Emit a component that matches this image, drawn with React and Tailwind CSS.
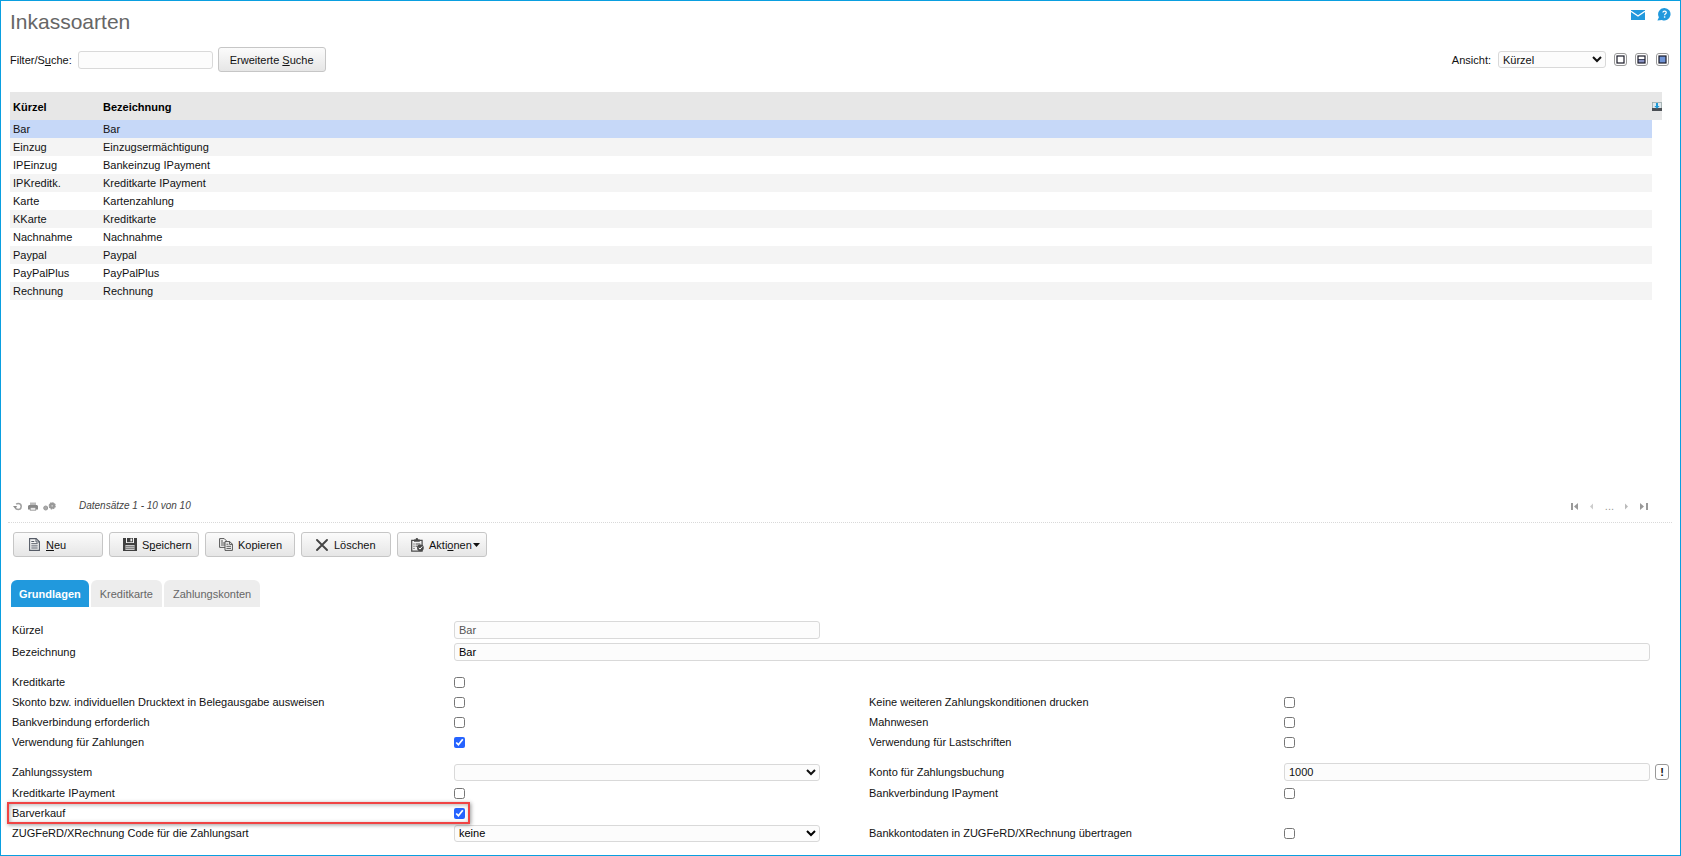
const rows = [
  ['Bar', 'Bar'],
  ['Einzug', 'Einzugsermächtigung'],
  ['IPEinzug', 'Bankeinzug IPayment'],
  ['IPKreditk.', 'Kreditkarte IPayment'],
  ['Karte', 'Kartenzahlung'],
  ['KKarte', 'Kreditkarte'],
  ['Nachnahme', 'Nachnahme'],
  ['Paypal', 'Paypal'],
  ['PayPalPlus', 'PayPalPlus'],
  ['Rechnung', 'Rechnung'],
];

const fieldClass = 'w-full rounded-[3px] border border-[#d9d9d9] bg-[#fcfcfc]';
const buttonClass =
  'flex h-[25px] items-center rounded-[3px] border border-[#c6c6c6] bg-linear-to-b from-[#fbfbfb] to-[#e6e6e6]';
const gridClass = 'grid grid-cols-[442fr_366fr_49fr_415fr_366fr] items-center';

function MailIcon() {
  return (
    <svg width="14" height="10" viewBox="0 0 14 10">
      <rect width="14" height="10" fill="#2199dd" />
      <path d="M0 1.2 L7 6 L14 1.2" fill="none" stroke="#fff" strokeWidth="1.3" />
    </svg>
  );
}

function HelpIcon() {
  return (
    <svg width="14" height="13" viewBox="0 0 14 13">
      <path d="M7.5 0a6.2 6.2 0 1 1-2.6 11.9L0.4 12.6 1.9 9.2A6.2 6.2 0 0 1 7.5 0Z" fill="#2199dd" />
      <path d="M5.9 4.5c.1-1.9 3.4-1.9 3.4 0 0 1.3-1.7 1.2-1.7 2.7" fill="none" stroke="#fff" strokeWidth="1.2" />
      <rect x="6.9" y="8.3" width="1.4" height="1.4" fill="#fff" />
    </svg>
  );
}

function ViewIcon({ kind }) {
  return (
    <svg width="9" height="9" viewBox="0 0 9 9">
      <rect x="1" y="1" width="7" height="7" fill={kind === 'full' ? '#6f93d6' : '#fff'} />
      {kind === 'split' && <rect x="1" y="4" width="7" height="4" fill="#8a93c4" />}
      {kind === 'split' && <rect x="1" y="4" width="7" height="1" fill="#444a66" />}
      <rect x="1" y="1" width="7" height="7" fill="none" stroke="#1c1c28" strokeWidth="1.2" />
    </svg>
  );
}

function ExportIcon() {
  return (
    <svg width="10" height="9" viewBox="0 0 10 9">
      <rect x="0.5" y="0.5" width="9" height="6" fill="#dfe6ea" stroke="#9aa" strokeWidth="0.8" />
      <rect x="0" y="6" width="10" height="3" fill="#4b4f54" />
      <path d="M4 1h2v3h1.6L5 6.8 2.4 4H4Z" fill="#1e9ad8" />
    </svg>
  );
}

function ReloadIcon() {
  return (
    <svg width="10" height="9" viewBox="0 0 10 9">
      <circle cx="5.2" cy="4.5" r="3" fill="none" stroke="#a0a0a0" strokeWidth="1.5" strokeDasharray="16.6 2.2" strokeDashoffset="-11.6" />
      <path d="M0 4h4.2L2.1 6.4Z" fill="#8c8c8c" />
    </svg>
  );
}

function PrintIcon() {
  return (
    <svg width="10" height="9" viewBox="0 0 10 9">
      <path d="M2 .5h6V3H2Z" fill="#bbb" />
      <path d="M1 3h8l1 1v3.5H0V4Z" fill="#888" />
      <rect x="2.2" y="5.4" width="5.6" height="2.8" fill="#e9e9e9" stroke="#888" strokeWidth="0.7" />
    </svg>
  );
}

function GearsIcon() {
  return (
    <svg width="13" height="9" viewBox="0 0 13 9">
      <circle cx="2.7" cy="6" r="2" fill="#aaa" stroke="#999" />
      <circle cx="9.2" cy="3.8" r="3" fill="#999" stroke="#999" strokeWidth="1.2" strokeDasharray="1.6 0.7" />
      <circle cx="9.2" cy="3.8" r="0.9" fill="#ccc" />
    </svg>
  );
}

function DocIcon() {
  return (
    <svg width="11" height="13" viewBox="0 0 11 13">
      <path d="M.6.6h6.6l3.2 3.2v8.6H.6Z" fill="#f4f4f4" stroke="#555b66" strokeWidth="1.1" />
      <path d="M7 .6v3.4h3.4M2.3 3.5h3M2.3 5.7h6.4M2.3 7.9h6.4M2.3 10h6.4" fill="none" stroke="#555b66" />
    </svg>
  );
}

function SaveIcon() {
  return (
    <svg width="14" height="13" viewBox="0 0 14 13">
      <path d="M0 0h3v5h8V0h3v13H0Z" fill="#3f3f3f" />
      <path d="M4 0h6v4.2H4Z" fill="#3f3f3f" />
      <rect x="7.4" y="0.6" width="1.8" height="2.8" fill="#eee" />
      <rect x="2.4" y="7" width="9.2" height="5" fill="#c8c8c8" />
      <path d="M2.4 8.6h9.2M2.4 10.4h9.2" stroke="#666" strokeWidth="0.8" />
    </svg>
  );
}

function CopyIcon() {
  return (
    <svg width="14" height="13" viewBox="0 0 14 13">
      <path d="M.6.6h4.6l2.2 2.2v6.6H.6Z" fill="#f4f4f4" stroke="#555" />
      <path d="M2 3h2M2 5h4M2 7h4" stroke="#555" />
      <path d="M6 3.6h4.8l2.6 2.6v6.2H6Z" fill="#f4f4f4" stroke="#555" />
      <path d="M10.6 3.6v2.8h2.8M7.4 6.2h2M7.4 8.3h4.6M7.4 10.4h4.6" fill="none" stroke="#555" />
    </svg>
  );
}

function DeleteIcon() {
  return (
    <svg width="12" height="12" viewBox="0 0 12 12">
      <path d="M1 1 11 11M11 1 1 11" stroke="#444" strokeWidth="1.9" strokeLinecap="round" />
    </svg>
  );
}

function ActionsIcon() {
  return (
    <svg width="13" height="14" viewBox="0 0 13 14">
      <path d="M.7 2.3h10.4v10.9H.7Z" fill="#f2f2f2" stroke="#4a4a4a" strokeWidth="1.2" />
      <path d="M3 1.4h1.6a1.3 1.3 0 0 1 2.6 0h1.6v2.4H3Z" fill="#4a4a4a" />
      <path d="M2.4 6h1.2M4.6 6h4.6M2.4 8.2h1.2M4.6 8.2h2M2.4 10.4h1.2" stroke="#4a4a4a" />
      <circle cx="9.4" cy="9.8" r="3.4" fill="#4a4a4a" />
      <path d="M7.8 9.8l1.2 1.3 2.2-2.6" fill="none" stroke="#fff" />
    </svg>
  );
}

function PagerIcon({ d, fill }) {
  return (
    <svg width="8" height="7" viewBox="0 0 8 7">
      <path d={d} fill={fill} />
    </svg>
  );
}

function Check({ id, label, checked }) {
  return (
    <>
      <label htmlFor={id}>{label}</label>
      <input id={id} type="checkbox" defaultChecked={checked} className="size-[11px] accent-[#2563ff]" />
    </>
  );
}

export default function App() {
  return (
    <div className="flex min-h-screen flex-col border border-[#0a9fe0] bg-white font-['Liberation_Sans',Arial,sans-serif] text-[11px] leading-[14px] text-[#111]">
      <header className="flex items-start justify-between pt-[7px] pr-[9px] pl-[9px]">
        <h1 className="text-[21px] leading-[28px] text-[#666]">Inkassoarten</h1>
        <div className="flex items-center gap-[12px]">
          <a href="#mail" aria-label="Nachricht"><MailIcon /></a>
          <a href="#hilfe" aria-label="Hilfe"><HelpIcon /></a>
        </div>
      </header>

      <div className="flex items-center justify-between pt-[11px] pr-[11px] pl-[9px]">
        <div className="flex items-center">
          <label htmlFor="filter">Filter/S<u>u</u>che:</label>
          <input id="filter" className="ml-[6px] h-[18px] w-[135px] rounded-[3px] border border-[#d9d9d9] bg-[#fcfcfc] px-1" />
          <button className={`${buttonClass} ml-[5px] px-[11px]`}>
            <span>Erweiterte <u>S</u>uche</span>
          </button>
        </div>
        <div className="flex items-center">
          <label htmlFor="ansicht">Ansicht:</label>
          <select id="ansicht" className="ml-[7px] h-[17px] w-[108px] rounded-[3px] border border-[#d9d9d9] bg-[#fcfcfc]">
            <option>Kürzel</option>
          </select>
          <div className="ml-[8px] flex gap-[8px]">
            {['empty', 'split', 'full'].map((kind) => (
              <button key={kind} aria-label={kind} className="flex size-[13px] items-center justify-center rounded-[3px] border border-[#999] bg-white">
                <ViewIcon kind={kind} />
              </button>
            ))}
          </div>
        </div>
      </div>

      <div className="mt-[20px] flex-1 pr-[18px] pl-[9px]">
        <table className="w-full table-fixed border-collapse text-left">
          <colgroup>
            <col className="w-[90px]" />
            <col />
            <col className="w-[10px]" />
          </colgroup>
          <thead>
            <tr className="h-[28px] bg-[#e7e7e7]">
              <th className="px-[3px] pt-[2px] font-bold text-black">Kürzel</th>
              <th className="px-[3px] pt-[2px] font-bold text-black">Bezeichnung</th>
              <th className="p-0"><button aria-label="Export" className="block"><ExportIcon /></button></th>
            </tr>
          </thead>
          <tbody>
            {rows.map(([code, name], i) => {
              const color = i === 0 ? 'bg-[#c6d8f8]' : i % 2 ? 'bg-[#f4f4f4]' : 'bg-white';
              return (
                <tr key={code} className="h-[18px]">
                  <td className={`${color} px-[3px] py-0`}>{code}</td>
                  <td className={`${color} px-[3px] py-0`}>{name}</td>
                  <td className="p-0"></td>
                </tr>
              );
            })}
          </tbody>
        </table>
      </div>

      <div className="mr-[8px] ml-[7px] flex items-center justify-between border-b border-dotted border-[#d9d9d9] pr-[24px] pb-[9px] pl-[5px]">
        <div className="flex items-center">
          <div className="flex items-center gap-[5px]">
            <button aria-label="Aktualisieren"><ReloadIcon /></button>
            <button aria-label="Drucken"><PrintIcon /></button>
            <button aria-label="Einstellungen"><GearsIcon /></button>
          </div>
          <span className="ml-[23px] text-[10px] text-[#444] italic">Datensätze 1 - 10 von 10</span>
        </div>
        <div className="flex items-center gap-[9px]">
          <button aria-label="Erste Seite"><PagerIcon d="M0 0h2v7H0ZM7 0v7L3 3.5Z" fill="#999" /></button>
          <button aria-label="Vorige Seite"><PagerIcon d="M5 .5v6L2 3.5Z" fill="#ccc" /></button>
          <span className="text-[#999]">...</span>
          <button aria-label="Nächste Seite"><PagerIcon d="M2 .5v6l3-3Z" fill="#bbb" /></button>
          <button aria-label="Letzte Seite"><PagerIcon d="M0 0v7l4-3.5ZM6 0h2v7H6Z" fill="#999" /></button>
        </div>
      </div>

      <div className="flex gap-[6px] pt-[9px] pl-[12px]">
        <button className={`${buttonClass} w-[90px] gap-[6px] pl-[15px]`}>
          <DocIcon /><span><u>N</u>eu</span>
        </button>
        <button className={`${buttonClass} w-[90px] gap-[5px] pl-[13px]`}>
          <SaveIcon /><span>S<u>p</u>eichern</span>
        </button>
        <button className={`${buttonClass} w-[90px] gap-[5px] pl-[13px]`}>
          <CopyIcon /><span>Kopieren</span>
        </button>
        <button className={`${buttonClass} w-[90px] gap-[6px] pl-[14px]`}>
          <DeleteIcon /><span>Löschen</span>
        </button>
        <button className={`${buttonClass} w-[90px] gap-[5px] pl-[13px]`}>
          <ActionsIcon />
          <span className="flex items-center gap-px">
            <span>Akti<u>o</u>nen</span>
            <svg width="7" height="4" viewBox="0 0 7 4"><path d="M0 0h7L3.5 4Z" fill="#111" /></svg>
          </span>
        </button>
      </div>

      <nav className="flex gap-[2px] pt-[23px] pl-[10px] text-[#666]">
        <button className="h-[27px] rounded-t-[6px] bg-[#2199dd] px-[8px] font-bold text-white">Grundlagen</button>
        <button className="h-[27px] rounded-t-[6px] bg-[#ededed] px-[9px]">Kreditkarte</button>
        <button className="h-[27px] rounded-t-[6px] bg-[#ededed] px-[9px]">Zahlungskonten</button>
      </nav>

      <form className="pt-[12px] pr-[30px] pb-[12px] pl-[11px]">
        <div className={`${gridClass} auto-rows-[22px]`}>
          <label htmlFor="kuerzel">Kürzel</label>
          <input id="kuerzel" readOnly defaultValue="Bar" className={`${fieldClass} h-[18px] px-1 text-[#555]`} />
          <label htmlFor="bezeichnung" className="col-start-1">Bezeichnung</label>
          <input id="bezeichnung" defaultValue="Bar" className={`${fieldClass} col-span-4 h-[18px] px-1 text-black`} />
        </div>

        <div className={`${gridClass} mt-[9px] auto-rows-[20px]`}>
          <Check id="kreditkarte" label="Kreditkarte" />
          <span className="col-span-3" />
          <Check id="skonto" label="Skonto bzw. individuellen Drucktext in Belegausgabe ausweisen" />
          <span />
          <Check id="konditionen" label="Keine weiteren Zahlungskonditionen drucken" />
          <Check id="bankverbindung" label="Bankverbindung erforderlich" />
          <span />
          <Check id="mahnwesen" label="Mahnwesen" />
          <Check id="zahlungen" label="Verwendung für Zahlungen" checked />
          <span />
          <Check id="lastschriften" label="Verwendung für Lastschriften" />
        </div>

        <div className={`${gridClass} mt-[9px] grid-rows-[22px_20px_20px_20px]`}>
          <label htmlFor="system">Zahlungssystem</label>
          <select id="system" className={`${fieldClass} h-[17px]`}><option></option></select>
          <span />
          <label htmlFor="konto">Konto für Zahlungsbuchung</label>
          <div className="-mr-[19px] flex items-center gap-[5px]">
            <input id="konto" defaultValue="1000" className={`${fieldClass} h-[18px] px-1`} />
            <button type="button" className="flex h-[16px] w-[14px] shrink-0 items-center justify-center rounded-[3px] border border-[#999] bg-white font-bold">!</button>
          </div>
          <Check id="kk-ipayment" label="Kreditkarte IPayment" />
          <span />
          <Check id="bank-ipayment" label="Bankverbindung IPayment" />
          <div className="relative col-span-2 grid grid-cols-[442fr_366fr] items-center">
            <Check id="barverkauf" label="Barverkauf" checked />
            <div className="pointer-events-none absolute -inset-y-[4px] -left-[5px] grid w-full grid-cols-[442fr_366fr]">
              <div className="-mr-[21px] border-2 border-[#f04343] shadow-[1px_1px_4px_rgba(0,0,0,0.4),inset_1px_1px_4px_rgba(0,0,0,0.3)]" />
            </div>
          </div>
          <span className="col-span-3" />
          <label htmlFor="zugferd">ZUGFeRD/XRechnung Code für die Zahlungsart</label>
          <select id="zugferd" className={`${fieldClass} h-[17px] text-black`}><option>keine</option></select>
          <span />
          <Check id="kontodaten" label="Bankkontodaten in ZUGFeRD/XRechnung übertragen" />
        </div>
      </form>
    </div>
  );
}
